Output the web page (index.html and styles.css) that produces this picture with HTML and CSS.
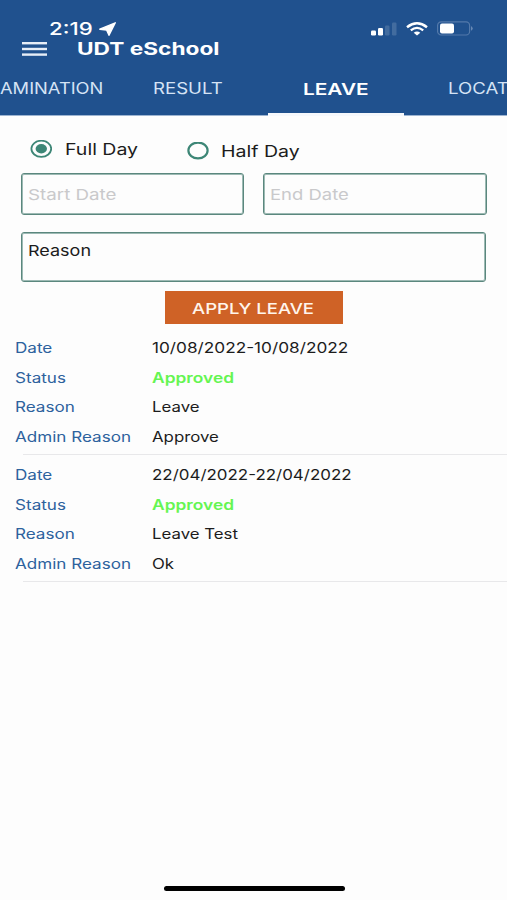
FILE: index.html
```html
<!DOCTYPE html>
<html lang="en">
<head>
<meta charset="utf-8">
<title>UDT eSchool</title>
<link rel="stylesheet" href="styles.css">
</head>
<body>
<div class="screen">
  <header class="header">
    <div class="status">
      <div class="clock"><span class="t time">2:19</span>
        <svg class="arrow" width="18" height="14" viewBox="0 0 18 14"><path d="M16.3 .8 L.8 7.2 L7.6 8 L10 13.3 Z" fill="#fff" stroke="#fff" stroke-width="1.4" stroke-linejoin="round"/></svg>
      </div>
      <div class="indicators">
        <svg width="27" height="14" viewBox="0 0 27 14"><rect x="1" y="8.5" width="5" height="5" rx="1.2" fill="#fff"/><rect x="8" y="6" width="5" height="7.5" rx="1.2" fill="#fff"/><rect x="15" y="3.5" width="4.5" height="10" rx="1.2" fill="#426c9f"/><rect x="22" y="0.5" width="4.5" height="13" rx="1.2" fill="#426c9f"/></svg>
        <svg width="22" height="14" viewBox="0 0 22 14" fill="none" stroke="#fff"><path d="M1 5.2 Q11 -2.6 21 5.2" stroke-width="2.5"/><path d="M4.8 8.4 Q11 3.4 17.2 8.4" stroke-width="2.3"/><path d="M7.7 10.8 Q11 8.2 14.3 10.8 L11 13.6Z" fill="#fff" stroke="none"/></svg>
        <svg width="36" height="15" viewBox="0 0 36 15"><rect x=".6" y=".8" width="32" height="13.2" rx="3.6" fill="none" stroke="#5379aa" stroke-width="1.2"/><rect x="3" y="2.4" width="14" height="10.2" rx="2" fill="#fff"/><path d="M34.2 5 Q37 7.4 34.2 9.8Z" fill="#7896bd"/></svg>
      </div>
    </div>
    <div class="titlebar">
      <svg width="25" height="16" viewBox="0 0 25 16" fill="#e6edf7"><rect y="1" width="25" height="2.4"/><rect y="6.8" width="25" height="2.4"/><rect y="12.4" width="25" height="2.4"/></svg>
      <h1 class="t title">UDT eSchool</h1>
    </div>
    <nav class="tabs">
      <div class="tab exam"><span class="t">AMINATION</span></div>
      <div class="tab result"><span class="t">RESULT</span></div>
      <div class="tab active"><span class="t">LEAVE</span></div>
      <div class="tab loc"><span class="t">LOCAT</span></div>
    </nav>
  </header>
  <main>
    <div class="radios">
      <div class="radio full"><svg width="22" height="18" viewBox="0 0 22 18"><ellipse cx="11.3" cy="8.8" rx="9.9" ry="8.1" fill="none" stroke="#3d8676" stroke-width="1.8"/><ellipse cx="11.3" cy="8.8" rx="5.7" ry="4.7" fill="#3d8676"/></svg><span class="t">Full Day</span></div>
      <div class="radio half"><svg width="22" height="18" viewBox="0 0 22 18"><ellipse cx="11" cy="8.5" rx="9.6" ry="7.9" fill="none" stroke="#3d8676" stroke-width="2.2"/></svg><span class="t">Half Day</span></div>
    </div>
    <div class="dates">
      <div class="field"><span class="t start">Start Date</span></div>
      <div class="field"><span class="t end">End Date</span></div>
    </div>
    <div class="field reason"><span class="t">Reason</span></div>
    <div class="apply"><span class="t">APPLY LEAVE</span></div>
    <section class="record">
      <div class="row"><span class="t label">Date</span><span class="t date">10/08/2022-10/08/2022</span></div>
      <div class="row"><span class="t label">Status</span><span class="t ok">Approved</span></div>
      <div class="row"><span class="t label">Reason</span><span class="t">Leave</span></div>
      <div class="row"><span class="t label">Admin Reason</span><span class="t">Approve</span></div>
    </section>
    <section class="record">
      <div class="row"><span class="t label">Date</span><span class="t date later">22/04/2022-22/04/2022</span></div>
      <div class="row"><span class="t label">Status</span><span class="t ok">Approved</span></div>
      <div class="row"><span class="t label">Reason</span><span class="t">Leave Test</span></div>
      <div class="row"><span class="t label">Admin Reason</span><span class="t">Ok</span></div>
    </section>
  </main>
  <div class="home"></div>
</div>
</body>
</html>
```
FILE: styles.css
```css
* { box-sizing: border-box; }
body { margin: 0; background: #fdfdfd; font-family: Inter, "Liberation Sans", sans-serif; color: #1c1c1c; }
.screen { width: 507px; height: 900px; display: flex; flex-direction: column; overflow: hidden; }
.t { display: inline-block; white-space: nowrap; transform: scaleX(1.2); transform-origin: left center; }

.header { height: 116px; background: #20518e; border-bottom: 1px solid #9db4d1; color: #fff; }
.status { height: 38px; padding: 18px 34px 0 49px; display: flex; justify-content: space-between; }
.clock { display: flex; align-items: center; height: 21px; }
.time { width: 50px; font-size: 17.5px; font-weight: 500; transform: scaleX(1.27); }
.indicators { display: flex; align-items: center; gap: 9px; height: 21px; }
.titlebar { height: 22px; padding-left: 22px; display: flex; align-items: center; }
.title { margin: 0 0 0 30px; font-size: 17.5px; font-weight: 700; line-height: 22px; transform: scaleX(1.295); }
.tabs { height: 56px; display: grid; grid-template-columns: 106px 162px 136px 103px; font-size: 15.5px; color: #d5e3f5; }
.tab { height: 56px; display: flex; align-items: center; padding-top: 1px; }
.exam .t { transform: scaleX(1.18); }
.result { padding-left: 47px; }
.active { padding-left: 35px; color: #fff; font-size: 16px; font-weight: 600; border-bottom: 3px solid #f6f8fc; padding-top: 4px; }
.active .t { transform: scaleX(1.3); }
.loc { padding-left: 44px; }

.radios { height: 57px; padding: 0 30px; display: flex; font-size: 16px; }
.radio { display: flex; align-items: center; gap: 13px; height: 20px; }
.radio .t { transform: scaleX(1.22); }
.full { width: 157px; margin-top: 23px; }
.half { margin-top: 25px; gap: 12px; }
.dates { display: grid; grid-template-columns: 223px 224px; gap: 19px; padding-left: 21px; }
.field { height: 42px; border: 1px solid #5b877e; box-shadow: inset 0 0 0 1px #9dbab4; border-radius: 3px; padding: 0 6px; display: flex; align-items: center; font-size: 15px; color: #c9c9cb; }
.start { transform: scaleX(1.25); }
.end { transform: scaleX(1.23); }
.reason { width: 465px; height: 50px; margin: 17px 0 0 21px; align-items: flex-start; padding-top: 8px; color: #1c1c1c; }
.apply { width: 178px; height: 33px; margin: 9px 0 0 165px; padding: 1px 0 0 27px; background: #cf6226; color: #fff5ec; font-size: 15px; font-weight: 500; display: flex; align-items: center; }
.apply .t { transform: scaleX(1.235); }
.record { height: 127px; padding-top: 8.5px; font-size: 14px; }
.row { height: 29.8px; display: grid; grid-template-columns: 137px 1fr; align-items: center; padding-left: 15px; }
.row .t { justify-self: start; }
.row .label { color: #2d629d; transform: scaleX(1.22); }
.row .date { transform: scaleX(1.23); }
.row .later { transform: scaleX(1.21); }
.row .ok { color: #65f552; font-weight: 600; transform: scaleX(1.24); }
.record::after { content: ""; display: block; height: 1px; margin: 2px 0 0 23px; background: #e8e8ea; }
.home { width: 181px; height: 5px; border-radius: 3px; background: #000; margin: auto 0 9px 164px; }
```
